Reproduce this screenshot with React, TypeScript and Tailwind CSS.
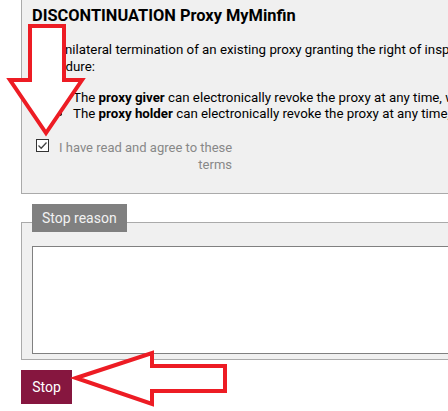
import React from "react";

function CheckBox() {
  return (
    <span className="mt-[1px] flex h-[13px] w-[13px] shrink-0 items-center justify-center border border-[#333] bg-white">
      <svg width="11" height="11" viewBox="0 0 11 11" fill="none">
        <path d="M1.5 5.5 L4.2 8.2 L9.5 2.5" stroke="#444" strokeWidth="1.3" />
      </svg>
    </span>
  );
}

function Arrows() {
  return (
    <svg
      className="pointer-events-none absolute left-0 top-0"
      width="448"
      height="411"
      viewBox="0 0 448 411"
    >
      <polygon
        points="30,26 64,26 64,80 82,80 46,133 10,80 30,80"
        fill="white"
        stroke="#ed1c24"
        strokeWidth="4"
        strokeLinejoin="miter"
      />
      <polygon
        points="76,378 152,353 152,366 225,366 225,391 152,391 152,404"
        fill="white"
        stroke="#ed1c24"
        strokeWidth="4"
        strokeLinejoin="miter"
      />
    </svg>
  );
}

export default function App() {
  return (
    <div className="relative h-[411px] w-[448px] overflow-hidden bg-white font-['Roboto',sans-serif] text-[13.3px] text-black">
      <div className="w-[760px] pl-[21px]">
        <div className="border-x border-b border-[#aaa] bg-[#f0f0f0] px-[10px] pb-[20px] pt-[6px]">
          <h2 className="text-[16.4px] font-bold leading-[20px]">DISCONTINUATION Proxy MyMinfin</h2>
          <p className="mt-[15px] whitespace-nowrap leading-[17px]">
            The unilateral termination of an existing proxy granting the right of inspection is done according to the
            <br />
            procedure:
          </p>
          <ul className="mt-[15px] list-disc whitespace-nowrap pl-[41px] leading-[16px]">
            <li>
              The <b>proxy giver</b> can electronically revoke the proxy at any time, with immediate effect.
            </li>
            <li>
              The <b>proxy holder</b> can electronically revoke the proxy at any time, with immediate effect.
            </li>
          </ul>
          <div className="mt-[16px] flex items-start gap-[10px] pl-[4px]">
            <CheckBox />
            <span className="mt-[1px] w-[173px] whitespace-nowrap text-right text-[13px] leading-[17px] text-[#888]">
              I have read and agree to these
              <br />
              terms
            </span>
          </div>
        </div>

        <div className="mt-[10px] pl-[11px]">
          <span className="relative z-10 inline-block h-[28px] bg-[#808080] px-[10px] text-[14px] leading-[28px] text-[#f2f2f2]">
            Stop reason
          </span>
        </div>
        <div className="-mt-[10px] border border-[#aaa] bg-[#f0f0f0] px-[10px] pb-[5px] pt-[23px]">
          <div className="h-[108px] border border-[#808080] bg-white" />
        </div>

        <button className="mt-[10px] h-[34px] w-[51px] bg-[#86163f] text-[14px] text-white">Stop</button>
      </div>
      <Arrows />
    </div>
  );
}
